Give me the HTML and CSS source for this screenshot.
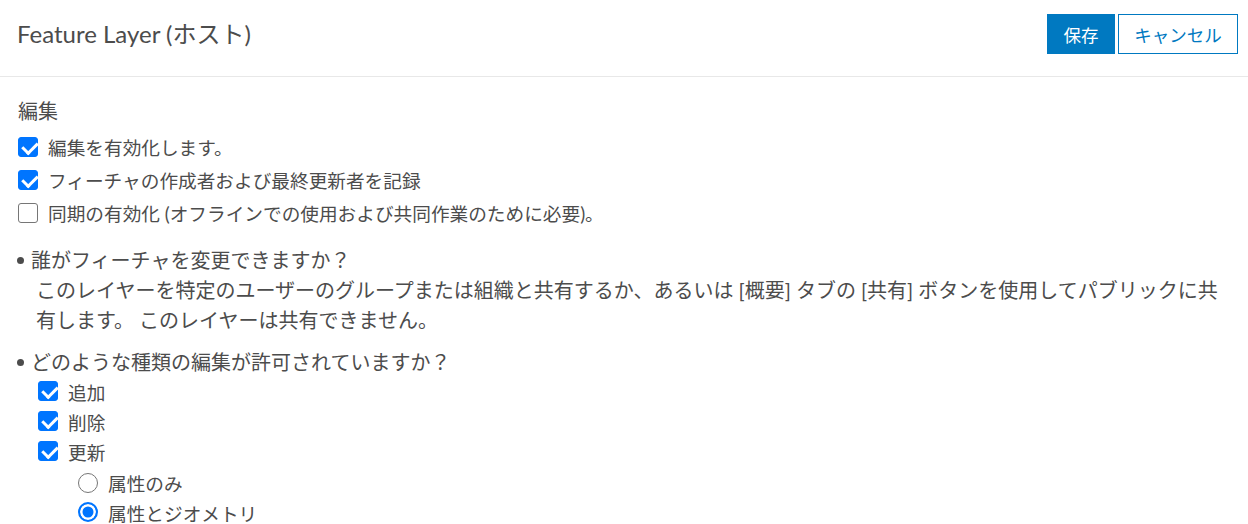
FILE: index.html
```html
<!DOCTYPE html>
<html lang="ja">
<head>
<meta charset="utf-8">
<title>Feature Layer (ホスト)</title>
<link rel="stylesheet" href="styles.css">
</head>
<body>
<header class="top">
  <h1 class="title">Feature Layer (ホスト)</h1>
  <div class="actions">
    <button class="btn btn-primary" type="button">保存</button>
    <button class="btn btn-outline" type="button">キャンセル</button>
  </div>
</header>
<main class="content">
  <h2 class="section-title">編集</h2>
  <div class="opts">
    <label class="opt"><input class="cb" type="checkbox" checked><span>編集を有効化します。</span></label>
    <label class="opt"><input class="cb" type="checkbox" checked><span>フィーチャの作成者および最終更新者を記録</span></label>
    <label class="opt"><input class="cb" type="checkbox"><span>同期の有効化 (オフラインでの使用および共同作業のために必要)。</span></label>
  </div>
  <ul class="qs">
    <li class="q">
      <div class="q-title">誰がフィーチャを変更できますか？</div>
      <p class="q-text">このレイヤーを特定のユーザーのグループまたは組織と共有するか、あるいは [概要] タブの [共有] ボタンを使用してパブリックに共有します。 このレイヤーは共有できません。</p>
    </li>
    <li class="q q2">
      <div class="q-title tight">どのような種類の編集が許可されていますか？</div>
      <div class="sub">
        <label class="opt opt-sm"><input class="cb" type="checkbox" checked><span>追加</span></label>
        <label class="opt opt-sm"><input class="cb" type="checkbox" checked><span>削除</span></label>
        <label class="opt opt-sm"><input class="cb" type="checkbox" checked><span>更新</span></label>
        <div class="radios">
          <label class="radio"><input class="rb" type="radio" name="upd"><span>属性のみ</span></label>
          <label class="radio"><input class="rb" type="radio" name="upd" checked><span>属性とジオメトリ</span></label>
        </div>
      </div>
    </li>
  </ul>
</main>
</body>
</html>
```

FILE: styles.css
```css
* { box-sizing: border-box; }
html, body { margin: 0; padding: 0; background: #fff; }
body {
  font-family: "Lato", "Noto Sans CJK JP", sans-serif;
  color: #4c4c4c;
  overflow: hidden;
}
.top {
  height: 77px;
  border-bottom: 1px solid #e8e8e8;
  display: flex;
  align-items: center;
  justify-content: space-between;
  padding: 0 10px 8px 17px;
}
.title {
  margin: 0;
  font-size: 24px;
  font-weight: 400;
  line-height: 30px;
  color: #4c4c4c;
}
.actions { display: flex; gap: 3px; }
.btn {
  height: 40px;
  font-family: inherit;
  font-size: 17.5px;
  padding: 0;
  white-space: nowrap;
  border: 1px solid #0079c1;
  border-radius: 0;
  cursor: pointer;
}
.btn-primary { background: #0079c1; color: #fff; width: 68px; }
.btn-outline { background: #fff; color: #0079c1; width: 120px; }

.content { padding: 19px 0 0 18px; }
.section-title {
  margin: 0;
  font-size: 20px;
  font-weight: 400;
  line-height: 30px;
}
.opts { margin-top: 4px; }
.opt {
  display: flex;
  align-items: center;
  height: 33px;
  font-size: 18.67px;
}
.cb {
  appearance: none;
  -webkit-appearance: none;
  position: relative;
  width: 20px;
  height: 20px;
  margin: 0 10px 0 0;
  flex: none;
  border: 1px solid #767676;
  border-radius: 3px;
  background: #fff;
}
.cb:checked {
  background: #0075ff;
  border-color: #0075ff;
}
.cb:checked::after {
  content: "";
  position: absolute;
  left: 5.5px;
  top: 1px;
  width: 7px;
  height: 12px;
  border-right: 3px solid #fff;
  border-bottom: 3px solid #fff;
  transform: rotate(45deg);
}
.qs { list-style: none; margin: 16px 0 0 0; padding: 0; }
.q2 { margin-top: 13px; }
.q-title {
  font-size: 20px;
  line-height: 30px;
  display: flex;
  align-items: center;
}
.q-title::before {
  content: "";
  width: 7px;
  height: 7px;
  border-radius: 50%;
  background: #4c4c4c;
  margin: 0 7px 0 -1px;
  flex: none;
}
.q-title.tight { line-height: 28px; }
.q-text {
  margin: 0;
  padding: 0 18px 0 18px;
  font-size: 20px;
  line-height: 30px;
}
.sub { padding-left: 20px; }
.opt-sm { height: 30px; }
.radios { margin-top: 2px; padding-left: 40px; }
.radio {
  display: flex;
  align-items: center;
  height: 29.5px;
  font-size: 18.67px;
}
.rb {
  appearance: none;
  -webkit-appearance: none;
  width: 20px;
  height: 20px;
  margin: 0 10px 0 0;
  flex: none;
  border: 1px solid #767676;
  border-radius: 50%;
  background: #fff;
}
.rb:checked {
  border: 2px solid #0075ff;
  background: #0075ff;
  box-shadow: inset 0 0 0 2.5px #fff;
}
```
